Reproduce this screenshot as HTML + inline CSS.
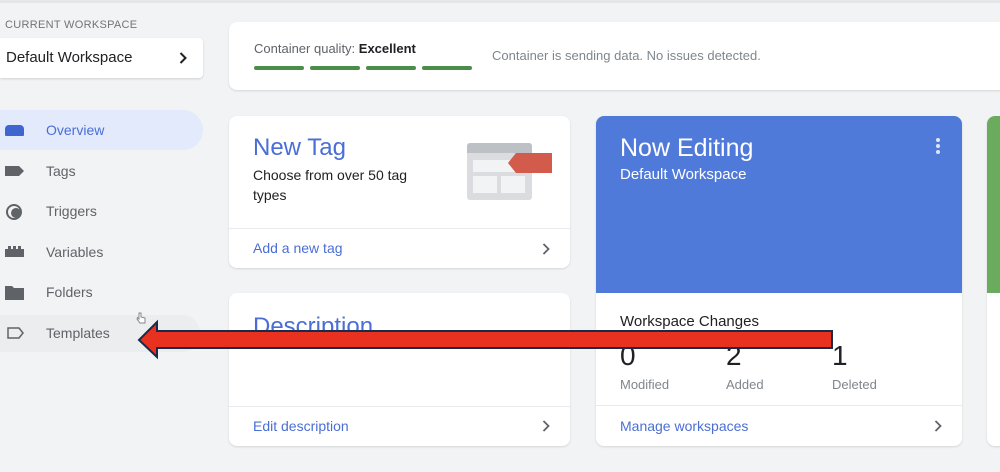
<!DOCTYPE html>
<html><head><style>
*{margin:0;padding:0;box-sizing:border-box}
body{width:1000px;height:472px;overflow:hidden;background:#f1f3f4;font-family:"Liberation Sans",sans-serif;position:relative}
.a{position:absolute}
.card{position:absolute;background:#fff;border-radius:8px;box-shadow:0 1px 2px rgba(0,0,0,.12)}
.nav{position:absolute;left:46px;font-size:14px;color:#5f6368}
.blue{color:#4a6ed6}
.chev{position:absolute}
</style></head><body>
<div class="a" style="left:0;top:0;width:1000px;height:3px;background:#e4e6e8"></div>
<div class="a" style="left:5px;top:19px;font-size:11px;color:#70757a;letter-spacing:.3px">CURRENT WORKSPACE</div>
<div class="a" style="left:0;top:38px;width:203px;height:40px;background:#fff;border-radius:0 4px 4px 0;box-shadow:0 1px 2px rgba(0,0,0,.15)"></div>
<div class="a" style="left:6px;top:49px;font-size:15px;color:#202124">Default Workspace</div>
<svg class="chev" style="left:179px;top:52px" width="8" height="12"><path d="M1.5 1l5 5-5 5" fill="none" stroke="#202124" stroke-width="2"/></svg>
<div class="a" style="left:0;top:110px;width:203px;height:40px;background:#e3eafb;border-radius:0 20px 20px 0"></div>
<div class="a" style="left:5px;top:125px;width:19px;height:11px;background:#3f66cf;border-radius:4px 4px 1px 1px"></div>
<div class="nav" style="top:122px;color:#4a6ed6">Overview</div>
<svg class="a" style="left:5px;top:165px" width="20" height="12"><path d="M0 1h14l5 5-5 5H0z" fill="#5f6368"/></svg>
<div class="nav" style="top:163px">Tags</div>
<svg class="a" style="left:5px;top:203px" width="18" height="18"><circle cx="9" cy="9" r="7" fill="none" stroke="#5f6368" stroke-width="2"/><circle cx="11" cy="10" r="5" fill="#5f6368"/></svg>
<div class="nav" style="top:203px">Triggers</div>
<svg class="a" style="left:5px;top:246px" width="20" height="11"><path d="M0 3h3V0h3v3h2V0h3v3h2V0h3v3h3v8H0z" fill="#5f6368"/></svg>
<div class="nav" style="top:244px">Variables</div>
<svg class="a" style="left:5px;top:286px" width="19" height="14"><path d="M0 0h7l2 2h10v12H0z" fill="#5f6368"/></svg>
<div class="nav" style="top:284px">Folders</div>
<div class="a" style="left:0;top:315px;width:200px;height:37px;background:#ebedef;border-radius:0 18px 18px 0"></div>
<svg class="a" style="left:7px;top:327px" width="18" height="12"><path d="M1 1h11l4 5-4 5H1z" fill="none" stroke="#5f6368" stroke-width="1.5"/></svg>
<div class="nav" style="top:325px">Templates</div>
<svg class="a" style="left:136px;top:312px" width="10" height="12"><path d="M3 1v6l-1.5-1.5L1 7l3 4h5V6l-4-1V1z" fill="#fff" stroke="#888" stroke-width="1"/></svg>

<div class="card" style="left:229px;top:22px;width:790px;height:68px"></div>
<div class="a" style="left:254px;top:41px;font-size:13px;color:#5f6368">Container quality: <b style="color:#202124">Excellent</b></div>
<div class="a" style="left:254px;top:66px;width:50px;height:4px;background:#4c8c4a;border-radius:2px"></div>
<div class="a" style="left:310px;top:66px;width:50px;height:4px;background:#4c8c4a;border-radius:2px"></div>
<div class="a" style="left:366px;top:66px;width:50px;height:4px;background:#4c8c4a;border-radius:2px"></div>
<div class="a" style="left:422px;top:66px;width:50px;height:4px;background:#4c8c4a;border-radius:2px"></div>
<div class="a" style="left:492px;top:48px;font-size:13px;color:#80868b">Container is sending data. No issues detected.</div>

<div class="card" style="left:229px;top:116px;width:341px;height:152px"></div>
<div class="a blue" style="left:253px;top:134px;font-size:24px">New Tag</div>
<div class="a" style="left:253px;top:165px;font-size:14px;color:#202124;line-height:20px;width:170px">Choose from over 50 tag types</div>
<div class="a" style="left:467px;top:143px;width:65px;height:57px;background:#dadce0;border-radius:3px"></div>
<div class="a" style="left:467px;top:143px;width:65px;height:10px;background:#bdc1c6;border-radius:3px 3px 0 0"></div>
<div class="a" style="left:473px;top:160px;width:52px;height:12px;background:#f1f3f4"></div>
<div class="a" style="left:473px;top:176px;width:24px;height:17px;background:#f1f3f4"></div>
<div class="a" style="left:501px;top:176px;width:24px;height:17px;background:#f1f3f4"></div>
<svg class="a" style="left:508px;top:153px" width="44" height="21"><path d="M8 0h36v20H8L0 10z" fill="#d25b4c"/></svg>
<div class="a" style="left:229px;top:228px;width:341px;height:1px;background:#e8eaed"></div>
<div class="a blue" style="left:253px;top:240px;font-size:14px">Add a new tag</div>
<svg class="chev" style="left:542px;top:243px" width="8" height="12"><path d="M1.5 1l5 5-5 5" fill="none" stroke="#5f6368" stroke-width="1.8"/></svg>

<div class="card" style="left:229px;top:293px;width:341px;height:153px"></div>
<div class="a blue" style="left:253px;top:313px;font-size:24px">Description</div>
<div class="a" style="left:229px;top:406px;width:341px;height:1px;background:#e8eaed"></div>
<div class="a blue" style="left:253px;top:418px;font-size:14px">Edit description</div>
<svg class="chev" style="left:542px;top:420px" width="8" height="12"><path d="M1.5 1l5 5-5 5" fill="none" stroke="#5f6368" stroke-width="1.8"/></svg>

<div class="card" style="left:596px;top:116px;width:366px;height:330px;overflow:hidden">
<div style="height:177px;background:#4f7ad9"></div></div>
<div class="a" style="left:620px;top:134px;font-size:25px;color:#fff">Now Editing</div>
<div class="a" style="left:620px;top:166px;font-size:15px;color:#fff">Default Workspace</div>
<div class="a" style="left:936px;top:138px;width:4px;height:4px;background:#dfe6f8;border-radius:2px;box-shadow:0 6px 0 #dfe6f8,0 12px 0 #dfe6f8"></div>
<div class="a" style="left:620px;top:313px;font-size:15px;color:#202124">Workspace Changes</div>
<div class="a" style="left:620px;top:340px;font-size:28px;color:#202124">0</div>
<div class="a" style="left:726px;top:340px;font-size:28px;color:#202124">2</div>
<div class="a" style="left:832px;top:340px;font-size:28px;color:#202124">1</div>
<div class="a" style="left:620px;top:377px;font-size:13px;color:#80868b">Modified</div>
<div class="a" style="left:726px;top:377px;font-size:13px;color:#80868b">Added</div>
<div class="a" style="left:832px;top:377px;font-size:13px;color:#80868b">Deleted</div>
<div class="a" style="left:596px;top:405px;width:366px;height:1px;background:#e8eaed"></div>
<div class="a blue" style="left:620px;top:418px;font-size:14px">Manage workspaces</div>
<svg class="chev" style="left:934px;top:420px" width="8" height="12"><path d="M1.5 1l5 5-5 5" fill="none" stroke="#5f6368" stroke-width="1.8"/></svg>

<div class="card" style="left:987px;top:116px;width:40px;height:330px;overflow:hidden"><div style="height:177px;background:#6aab5e"></div></div>

<svg class="a" style="left:0;top:0" width="1000" height="472"><path d="M139 340L157 322V331H832V348H157V357Z" fill="#e8311f" stroke="#1b2a4a" stroke-width="2" stroke-linejoin="miter"/></svg>
</body></html>
